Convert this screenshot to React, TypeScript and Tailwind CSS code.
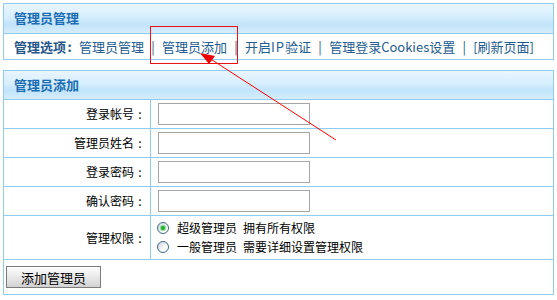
import React from 'react';

const FONT = "font-['Noto_Sans_CJK_SC','Noto_Sans',sans-serif]";
const HEADER_BG =
  'bg-[linear-gradient(to_bottom,#e9f6fe_0%,#d6eefd_45%,#c7e7fb_62%,#c2e4fa_70%,#d5edfc_100%)]';

const navItems: React.ReactNode[] = [
  '管理员管理',
  '管理员添加',
  <>
    开启<span className="tracking-[1px]">IP</span>验证
  </>,
  '管理登录Cookies设置',
  '[刷新页面]',
];

const formRows = [
  { label: '登录帐号', type: 'text' },
  { label: '管理员姓名', type: 'text' },
  { label: '登录密码', type: 'password' },
  { label: '确认密码', type: 'password' },
];

// colon centered in its own box, the way the bitmap font draws it
const Colon = ({ w = 'w-[12px]' }: { w?: string }) => <span className={`inline-block ${w} text-center`}>:</span>;

const Radio = ({ checked }: { checked?: boolean }) => (
  <span className="relative inline-flex h-[12px] w-[12px] shrink-0 items-center justify-center rounded-full border border-[#3f6488] bg-[linear-gradient(135deg,#cfd6de,#ffffff_70%)]">
    {checked && <span className="h-[4px] w-[4px] rounded-full bg-[#22b030] shadow-[0_0_1px_1px_#7fd886]" />}
  </span>
);

const FormRow = ({ label, type }: { label: string; type: string }) => (
  <div className="flex h-[29px] border-t border-[#8fcbf3]">
    <div className="flex w-[147px] items-center justify-end border-r border-[#8fcbf3] pr-[4px]">
      {label}
      <Colon />
    </div>
    <div className="flex items-center pl-[7px]">
      <input
        type={type}
        className="h-[22px] w-[152px] border border-[#a6a6a6] bg-white px-1 text-[12px] outline-none"
      />
    </div>
  </div>
);

export default function App() {
  return (
    <div className={`relative h-[300px] w-[557px] overflow-hidden bg-white px-[3px] pt-[3px] text-[12px] text-black ${FONT}`}>
      {/* 管理员管理 */}
      <div className="w-[551px] border border-[#8fcbf3]">
        <div className={`flex h-[29px] items-center pb-[1px] pl-[10px] text-[13px] font-bold text-[#1b6db3] ${HEADER_BG}`}>
          管理员管理
        </div>
        <div className="flex h-[26px] items-center whitespace-nowrap border-t border-[#8fcbf3] pl-[10px] text-[13px] text-[#235c91]">
          <span className="mr-[6px] font-bold text-[#25578a]">
            管理选项
            <Colon w="w-[7px]" />
          </span>
          {navItems.map((item, i) => (
            <React.Fragment key={i}>
              {i > 0 && <span className="inline-block w-[18px] text-center">|</span>}
              <span>{item}</span>
            </React.Fragment>
          ))}
        </div>
      </div>

      {/* 管理员添加 */}
      <div className="mt-[10px] w-[551px] border border-[#8fcbf3]">
        <div className={`flex h-[28px] items-center pl-[10px] text-[13px] font-bold text-[#1b6db3] ${HEADER_BG}`}>管理员添加</div>
        {formRows.map((row) => (
          <FormRow key={row.label} label={row.label} type={row.type} />
        ))}
        <div className="flex h-[44px] border-t border-[#8fcbf3]">
          <div className="flex w-[147px] items-center justify-end border-r border-[#8fcbf3] pr-[4px]">
            管理权限
            <Colon />
          </div>
          <div className="flex flex-col justify-center gap-[1px] pl-[6px]">
            <label className="flex h-[18px] items-center gap-[8px]">
              <Radio checked />
              <span>
                超级管理员<span className="inline-block w-[6px]" />拥有所有权限
              </span>
            </label>
            <label className="flex h-[18px] items-center gap-[8px]">
              <Radio />
              <span>
                一般管理员<span className="inline-block w-[6px]" />需要详细设置管理权限
              </span>
            </label>
          </div>
        </div>
        <div className="flex h-[35px] border-t border-[#8fcbf3] pl-[2px] pt-[6px]">
          <button className="h-[22px] w-[95px] border border-[#7c7c7c] bg-[linear-gradient(to_bottom,#fdfdfd,#e9e9e9_50%,#d2d2d2)] text-[13px] leading-none text-black">
            添加管理员
          </button>
        </div>
      </div>

      {/* annotation */}
      <div className="pointer-events-none absolute left-[150px] top-[26px] h-[38px] w-[88px] border border-[#ee1111]" />
      <svg className="pointer-events-none absolute left-0 top-0" width="557" height="300" viewBox="0 0 557 300">
        <line x1="336" y1="140" x2="209" y2="58" stroke="#ff0000" strokeWidth="1" />
        <polygon points="200,53 215,56 209,64" fill="#ee0000" />
      </svg>
    </div>
  );
}
